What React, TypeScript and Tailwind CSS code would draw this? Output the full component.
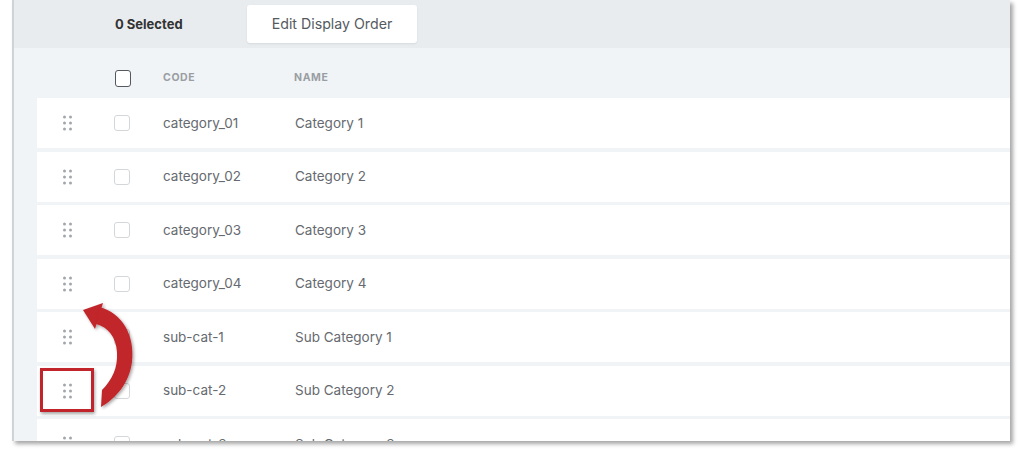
import React from "react";

const ROWS = [
  { code: "category_01", name: "Category 1" },
  { code: "category_02", name: "Category 2" },
  { code: "category_03", name: "Category 3" },
  { code: "category_04", name: "Category 4" },
  { code: "sub-cat-1", name: "Sub Category 1" },
  { code: "sub-cat-2", name: "Sub Category 2" },
  { code: "sub-cat-3", name: "Sub Category 3" },
];

function DragHandle() {
  return (
    <svg width="10" height="16" viewBox="0 0 10 16" aria-hidden>
      {[2, 8, 14].map((y) =>
        [1.5, 7.5].map((x) => (
          <circle key={`${x}-${y}`} cx={x} cy={y} r="1.5" fill="#a3a7ad" />
        ))
      )}
    </svg>
  );
}

function Annotation() {
  return (
    <>
      <svg
        className="pointer-events-none absolute left-0 top-0"
        width="1024"
        height="452"
        viewBox="0 0 1024 452"
        aria-hidden
      >
        <defs>
          <filter id="arrow-shadow" x="-30%" y="-30%" width="160%" height="160%">
            <feDropShadow dx="1.5" dy="1.5" stdDeviation="1.5" floodColor="#000" floodOpacity="0.35" />
          </filter>
        </defs>
        <g fill="#c1252b" filter="url(#arrow-shadow)">
          <polygon points="83,310 103,303 95,329" />
          <path d="M 99,307 C 123,313 135,336 132,362 C 129,384 116,398 101,407 L 102,390 C 112,380 118,368 117,352 C 116,337 108,327 96,324 Z" />
        </g>
      </svg>
      <div className="pointer-events-none absolute left-[40px] top-[368px] h-[44px] w-[54px] border-[3px] border-[#c1252b] shadow-[1px_2px_3px_rgba(0,0,0,0.35)]" />
    </>
  );
}

export default function App() {
  return (
    <div
      className="relative h-[452px] w-[1024px] overflow-hidden bg-white"
      style={{ fontFamily: "Inter, 'Noto Sans', sans-serif" }}
    >
      <div className="ml-[12px] h-[441px] w-[998px] overflow-hidden border-l-2 border-[#cfd2d6] bg-[#f1f4f7] shadow-[3px_3px_4px_rgba(0,0,0,0.35)]">
        {/* toolbar */}
        <div className="flex h-[48px] items-center bg-[#e9ecef]">
          <span className="ml-[101px] mt-[2px] w-[132px] text-[13px] font-bold text-[#333]">
            0 Selected
          </span>
          <button
            type="button"
            className="h-[38px] w-[170px] rounded-[3px] bg-white text-[14.2px] text-[#555a61] shadow-[0_1px_2px_rgba(0,0,0,0.08)]"
          >
            Edit Display Order
          </button>
        </div>

        <div className="ml-[23px]">
          {/* header */}
          <div className="flex h-[50px] items-center pt-[10px]">
            <div className="w-[78px]" />
            <div className="w-[48px]">
              <div className="h-[17px] w-[16px] rounded-[3px] border-[1.5px] border-[#55595e] bg-white" />
            </div>
            <div className="w-[131px] text-[10.5px] font-bold tracking-[0.06em] text-[#9a9ea3]">
              CODE
            </div>
            <div className="text-[10.5px] font-bold tracking-[0.06em] text-[#9a9ea3]">NAME</div>
          </div>

          {/* rows */}
          <div className="flex flex-col gap-[3.5px]">
            {ROWS.map((r) => (
              <div key={r.code} className="flex h-[50px] items-center bg-white">
                <div className="flex w-[77px] pl-[26px]">
                  <DragHandle />
                </div>
                <div className="w-[49px]">
                  <div className="h-[16px] w-[16px] rounded-[3px] border border-[#d4d7da] bg-white" />
                </div>
                <div className="w-[132px] text-[13.5px] text-[#666a70]">{r.code}</div>
                <div className="text-[13.5px] text-[#666a70]">{r.name}</div>
              </div>
            ))}
          </div>
        </div>
      </div>
      <Annotation />
    </div>
  );
}
